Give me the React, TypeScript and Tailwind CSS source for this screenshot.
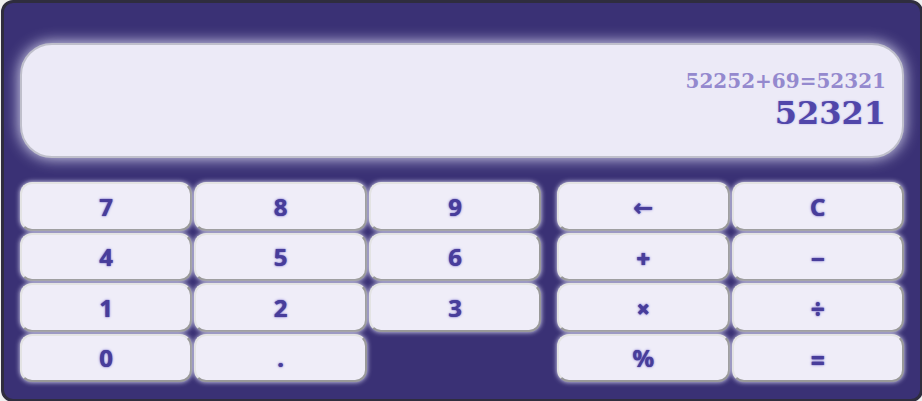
import { useState } from "react";

type Key = { label: string; name: string; place?: string; sign?: boolean };

const keys: Key[] = [
  { label: "7", name: "7" },
  { label: "8", name: "8" },
  { label: "9", name: "9" },
  { label: "←", name: "Backspace", place: "col-start-5" },
  { label: "C", name: "Clear" },
  { label: "4", name: "4" },
  { label: "5", name: "5" },
  { label: "6", name: "6" },
  { label: "+", name: "Add", place: "col-start-5", sign: true },
  { label: "−", name: "Subtract", sign: true },
  { label: "1", name: "1" },
  { label: "2", name: "2" },
  { label: "3", name: "3" },
  { label: "×", name: "Multiply", place: "col-start-5", sign: true },
  { label: "÷", name: "Divide", sign: true },
  { label: "0", name: "0" },
  { label: ".", name: "Decimal point" },
  { label: "%", name: "Percent", place: "col-start-5" },
  { label: "=", name: "Equals", sign: true },
];

function CalcKey({ item, onPress }: { item: Key; onPress: (label: string) => void }) {
  const face = item.sign
    ? "pt-1 font-['Open_Sans','Noto_Sans',sans-serif] font-extrabold"
    : "pt-px font-['Noto_Sans','DejaVu_Sans',sans-serif] font-bold";
  return (
    <button
      type="button"
      aria-label={item.name}
      onClick={() => onPress(item.label)}
      className={`flex items-center justify-center rounded-xl border-2 border-t-[#e3e3e3] border-l-[#e3e3e3] border-r-[#999999] border-b-[#999999] bg-[#efedf8] text-2xl text-[#483d9b] shadow-[0_0_5px_#e6e6fa] [text-shadow:0_0_1px_#483d9b,0_0_3px_#8f84dc] ${face} ${item.place ?? ""}`}
    >
      {item.label}
    </button>
  );
}

export default function App() {
  const [history, setHistory] = useState("52252+69=52321");
  const [value, setValue] = useState("52321");

  const press = (label: string) => {
    if (label === "C") {
      setValue("0");
      setHistory("");
    } else if (label === "←") {
      setValue((v) => v.slice(0, -1) || "0");
    } else if (/[0-9.]/.test(label)) {
      setValue((v) => (v === "0" ? label : v + label));
    }
  };

  return (
    <div className="overflow-hidden bg-[#f0f0f0] pl-px">
      <main className="-mr-px -mb-px rounded-xl border-3 border-[#2f2d3e] bg-[#3a3175] px-4 pt-10 pb-[17px]">
        <section
          aria-label="Display"
          className="mb-6 flex h-[115px] flex-col items-end justify-center rounded-[32px] border-2 border-[#bfbfcb] bg-[#eceaf7] px-4 font-['DejaVu_Serif',serif] font-bold shadow-[0_0_15px_#e6e6fa]"
        >
          <div className="h-6 text-xl leading-6 text-[#9489ce]">{history}</div>
          <output className="text-[32px] leading-10 text-[#5146aa] [text-shadow:0_0_2px_#a79fe0]">{value}</output>
        </section>
        <div className="grid h-[200px] grid-cols-[1fr_1fr_1fr_12px_1fr_1fr] grid-rows-4 gap-0.5">
          {keys.map((item) => (
            <CalcKey key={item.name} item={item} onPress={press} />
          ))}
        </div>
      </main>
    </div>
  );
}
